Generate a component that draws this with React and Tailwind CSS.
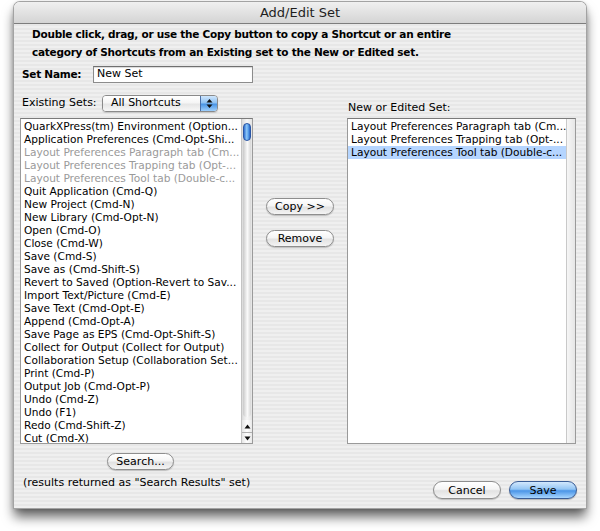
import React from 'react';

const LEFT_ITEMS = [
  { label: 'QuarkXPress(tm) Environment (Option...' },
  { label: 'Application Preferences (Cmd-Opt-Shi...' },
  { label: 'Layout Preferences Paragraph tab (Cm...', dim: true },
  { label: 'Layout Preferences Trapping tab (Opt-...', dim: true },
  { label: 'Layout Preferences Tool tab (Double-c...', dim: true },
  { label: 'Quit Application (Cmd-Q)' },
  { label: 'New Project (Cmd-N)' },
  { label: 'New Library (Cmd-Opt-N)' },
  { label: 'Open (Cmd-O)' },
  { label: 'Close (Cmd-W)' },
  { label: 'Save (Cmd-S)' },
  { label: 'Save as (Cmd-Shift-S)' },
  { label: 'Revert to Saved (Option-Revert to Sav...' },
  { label: 'Import Text/Picture (Cmd-E)' },
  { label: 'Save Text (Cmd-Opt-E)' },
  { label: 'Append (Cmd-Opt-A)' },
  { label: 'Save Page as EPS (Cmd-Opt-Shift-S)' },
  { label: 'Collect for Output (Collect for Output)' },
  { label: 'Collaboration Setup (Collaboration Set...' },
  { label: 'Print (Cmd-P)' },
  { label: 'Output Job (Cmd-Opt-P)' },
  { label: 'Undo (Cmd-Z)' },
  { label: 'Undo (F1)' },
  { label: 'Redo (Cmd-Shift-Z)' },
  { label: 'Cut (Cmd-X)' },
];

const RIGHT_ITEMS = [
  { label: 'Layout Preferences Paragraph tab (Cm...' },
  { label: 'Layout Preferences Trapping tab (Opt-...' },
  { label: 'Layout Preferences Tool tab (Double-c...', selected: true },
];

// white aqua pill button
function AquaButton({ children, className = '' }) {
  return (
    <div
      className={`flex items-center justify-center rounded-full border border-[#8e8e8e] bg-[linear-gradient(to_bottom,#ffffff_0%,#f5f5f5_45%,#e2e2e2_55%,#f4f4f4_100%)] shadow-[0_1px_1px_rgba(0,0,0,0.2)] text-[11px] leading-none text-black ${className}`}
    >
      {children}
    </div>
  );
}

function Row({ item }) {
  return (
    <div
      className={`h-[13px] leading-[13px] pl-[3px] whitespace-nowrap overflow-hidden text-[10.6px] ${
        item.selected ? 'bg-[#b5d5ff]' : ''
      } ${item.dim ? 'text-[#9a9a9a]' : 'text-black'}`}
    >
      {item.label}
    </div>
  );
}

export default function App() {
  return (
    <div className="w-[600px] h-[531px] bg-white pt-[2px] pl-[14px] font-['DejaVu_Sans',sans-serif]">
      {/* Window */}
      <div className="w-[572px] h-[506px] rounded-t-[6px] overflow-hidden flex flex-col bg-[repeating-linear-gradient(to_bottom,#efefef_0px,#efefef_2px,#e7e7e7_2px,#e7e7e7_4px)] shadow-[0_0_0_1px_#a3a3a3,0_9px_12px_rgba(0,0,0,0.6),0_1px_5px_rgba(0,0,0,0.25)]">
        {/* Title bar */}
        <div className="h-[22px] shrink-0 flex items-center justify-center border-b border-[#7d7d7d] bg-[linear-gradient(to_bottom,#f0f0f0,#d4d4d4)] text-[13px] text-[#1e1e1e]">
          Add/Edit Set
        </div>

        {/* Description */}
        <div className="mt-[1px] pl-[18px] text-[10.5px] leading-[18px] font-bold tracking-[-0.25px] text-black">
          <div>Double click, drag, or use the Copy button to copy a Shortcut or an entire</div>
          <div>category of Shortcuts from an Existing set to the New or Edited set.</div>
        </div>

        {/* Set name */}
        <div className="mt-[5px] pl-[8px] h-[17px] flex items-center">
          <div className="w-[71px] text-[10.5px] font-bold tracking-[-0.25px] text-black">Set Name:</div>
          <div className="w-[160px] h-[17px] bg-white border border-[#8c8c8c] border-t-[#6f6f6f] shadow-[inset_0_1px_1px_rgba(0,0,0,0.15)] flex items-center pl-[3px] text-[11px] text-black">
            New Set
          </div>
        </div>

        {/* Existing sets header */}
        <div className="mt-[12px] pl-[8px] h-[17px] flex items-end">
          <div className="w-[80px] self-center text-[11px] text-black">Existing Sets:</div>
          <div className="w-[116px] h-[17px] flex rounded-[4px] border border-[#8a8a8a] overflow-hidden shadow-[0_1px_1px_rgba(0,0,0,0.15)]">
            <div className="flex-1 flex items-center pl-[8px] text-[11px] text-black bg-[linear-gradient(to_bottom,#ffffff_0%,#f5f5f5_45%,#e6e6e6_55%,#f7f7f7_100%)]">
              All Shortcuts
            </div>
            <div className="w-[17px] flex items-center justify-center border-l border-[#4a6fa8] bg-[linear-gradient(to_bottom,#cfe6fc_0%,#8fc2f3_45%,#4a95e6_55%,#9fd0fd_100%)]">
              <svg width="7" height="11" viewBox="0 0 7 11">
                <path d="M3.5 1 L6.5 4.5 L0.5 4.5 Z" fill="#111" />
                <path d="M3.5 10 L6.5 6.5 L0.5 6.5 Z" fill="#111" />
              </svg>
            </div>
          </div>
          <div className="ml-[130px] mb-[-4px] text-[11px] text-black">New or Edited Set:</div>
        </div>

        {/* Lists */}
        <div className="mt-[6px] pl-[6px] h-[326px] flex">
          {/* Existing list */}
          <div className="w-[233px] h-full flex border border-[#9a9a9a] border-t-[#7a7a7a]">
            <div className="flex-1 bg-white pt-[1px] overflow-hidden">
              {LEFT_ITEMS.map((item, i) => (
                <Row key={i} item={item} />
              ))}
            </div>
            {/* scrollbar */}
            <div className="w-[11px] flex flex-col bg-[linear-gradient(to_right,#dadada,#f7f7f7_50%,#e4e4e4)] border-l border-[#c4c4c4]">
              <div className="flex-1 px-[1px] pt-[4px] pb-[3px]">
                <div className="h-full rounded-full bg-[linear-gradient(to_right,#c9c9c9,#fafafa_55%,#d6d6d6)]">
                  <div className="h-[18px] rounded-full border border-[#2a56a5] bg-[linear-gradient(to_right,#2f6fd0,#8ec7f8_45%,#5aa2ec_70%,#2a62c2)]" />
                </div>
              </div>
              <div className="h-[12px] flex items-center justify-center bg-[linear-gradient(to_right,#e6e6e6,#ffffff_50%,#e9e9e9)]">
                <svg width="7" height="5" viewBox="0 0 7 5">
                  <path d="M3.5 0.5 L6.5 4.5 L0.5 4.5 Z" fill="#111" />
                </svg>
              </div>
              <div className="h-[11px] flex items-center justify-center border-t border-[#b0b0b0] bg-[linear-gradient(to_right,#e6e6e6,#ffffff_50%,#e9e9e9)]">
                <svg width="7" height="5" viewBox="0 0 7 5">
                  <path d="M3.5 4.5 L6.5 0.5 L0.5 0.5 Z" fill="#111" />
                </svg>
              </div>
            </div>
          </div>

          {/* Middle buttons */}
          <div className="w-[94px] flex flex-col items-center pt-[80px] gap-[15px]">
            <AquaButton className="w-[68px] h-[17px]">Copy &gt;&gt;</AquaButton>
            <AquaButton className="w-[68px] h-[17px]">Remove</AquaButton>
          </div>

          {/* New or edited list */}
          <div className="w-[229px] h-full flex border border-[#9a9a9a] border-t-[#7a7a7a]">
            <div className="flex-1 bg-white pt-[1px] overflow-hidden">
              {RIGHT_ITEMS.map((item, i) => (
                <Row key={i} item={item} />
              ))}
            </div>
            <div className="w-[9px] border-l border-[#c9c9c9] bg-[linear-gradient(to_right,#f6f6f6,#e6e6e6)]" />
          </div>
        </div>

        {/* Bottom */}
        <div className="mt-[9px] flex justify-between pr-[9px]">
          <div className="flex flex-col">
            <AquaButton className="ml-[93px] w-[67px] h-[17px]">Search...</AquaButton>
            <div className="mt-[6px] pl-[9px] text-[11px] leading-[13px] text-black">
              (results returned as "Search Results" set)
            </div>
          </div>
          <div className="mt-[28px] flex gap-[8px]">
            <AquaButton className="w-[68px] h-[18px]">Cancel</AquaButton>
            <div className="w-[68px] h-[18px] flex items-center justify-center rounded-full border border-[#3a5d96] bg-[linear-gradient(to_bottom,#d2e8fd_0%,#93c5f4_45%,#4b95e7_55%,#a8d6ff_100%)] shadow-[0_1px_1px_rgba(0,0,0,0.25)] text-[11px] leading-none text-black">
              Save
            </div>
          </div>
        </div>
      </div>
    </div>
  );
}
